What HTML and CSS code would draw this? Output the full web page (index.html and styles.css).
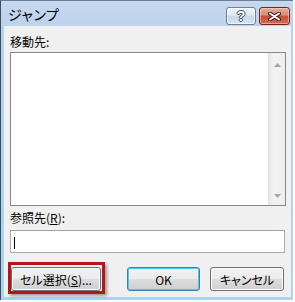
FILE: index.html
```html
<!DOCTYPE html>
<html lang="ja">
<head>
    <meta charset="UTF-8">
    <meta name="viewport" content="width=device-width, initial-scale=1.0">
    <title>ジャンプ</title>
    <link rel="stylesheet" href="styles.css">
</head>
<body>

    <div class="window">
        <div class="titlebar">
            <span class="title">ジャンプ</span>
            <div class="captionButtons">
                <button class="cap help"><span>?</span></button>
                <button class="cap close">
                    <svg width="13" height="9" viewBox="0 0 13 9">
                        <path d="M2 1.5 L11 7.5 M2 7.5 L11 1.5" stroke="#3b1f1a" stroke-width="4" stroke-linecap="round"/>
                        <path d="M2 1.5 L11 7.5 M2 7.5 L11 1.5" stroke="#fff" stroke-width="2" stroke-linecap="round"/>
                    </svg>
                </button>
            </div>
        </div>

        <div class="client">
            <label class="fieldLabel">移動先:</label>
            <div class="listbox">
                <div class="listItems"></div>
                <div class="scrollbar">
                    <svg width="7" height="4" viewBox="0 0 7 4"><path d="M0 4 L3.5 0 L7 4 Z" fill="#a6a6a6"/></svg>
                    <svg width="7" height="4" viewBox="0 0 7 4"><path d="M0 0 L7 0 L3.5 4 Z" fill="#a6a6a6"/></svg>
                </div>
            </div>

            <label class="fieldLabel refLabel">参照先(<u>R</u>):</label>
            <div class="textbox"><span class="caret"></span></div>

            <div class="buttonRow">
                <button class="btn selectBtn">セル選択(<u>S</u>)...</button>
                <button class="btn okBtn">OK</button>
                <button class="btn cancelBtn">キャンセル</button>
            </div>
        </div>
    </div>

</body>
</html>
```

FILE: styles.css
```css
body {
    margin: 0;
    padding: 0;
    width: 295px;
    height: 302px;
    overflow: hidden;
    background-color: #fff;
    font-family: 'Noto Sans CJK JP', 'Liberation Sans', sans-serif;
    font-size: 12px;
    font-feature-settings: "palt";
    color: #000;
}

.window {
    width: 293px;
    height: 300px;
    box-sizing: border-box;
    border-top: 1px solid #6b7f99;
    border-left: 1px solid #3d4b5e;
    padding: 0 2px 3px 3px;
    background: linear-gradient(to bottom, #c6d9ee, #b9d1ea 30px, #a9d6ee);
    display: flex;
    flex-direction: column;
}

.titlebar {
    height: 25px;
    display: flex;
    align-items: center;
    justify-content: space-between;
}

.title {
    margin-left: 4px;
    margin-top: 1px;
    font-size: 14px;
    letter-spacing: 0.5px;
}

.captionButtons {
    display: flex;
    gap: 3px;
    margin-top: 5px;
    margin-right: 1px;
}

.cap {
    height: 18px;
    padding: 0;
    border-radius: 3px;
    display: flex;
    align-items: center;
    justify-content: center;
}

.help {
    width: 30px;
    border: 1px solid #6f7f97;
    background: linear-gradient(to bottom, #f1f5fb, #dfe8f5 45%, #c8d7eb 50%, #d6e3f3);
    box-shadow: inset 0 0 0 1px rgba(255, 255, 255, 0.6);
}

.help span {
    font-family: 'Liberation Sans', sans-serif;
    font-weight: bold;
    font-size: 14px;
    line-height: 1;
    color: #fff;
    text-shadow: 1px 0 #3c4656, -1px 0 #3c4656, 0 1px #3c4656, 0 -1px #3c4656;
}

.close {
    width: 31px;
    border: 1px solid #6a2a22;
    background: linear-gradient(to bottom, #e9ab9d, #db8a78 45%, #c84f38 50%, #d36a4f);
    box-shadow: inset 0 0 0 1px rgba(255, 220, 210, 0.5);
}

.client {
    flex: 1;
    background-color: #f0f0f0;
    padding: 8px 5px 0 6px;
    display: flex;
    flex-direction: column;
}

.fieldLabel {
    display: block;
    line-height: 16px;
    height: 16px;
}

.listbox {
    margin-top: 2px;
    height: 154px;
    box-sizing: border-box;
    border: 1px solid #828790;
    background-color: #fff;
    display: flex;
}

.listItems {
    flex: 1;
}

.scrollbar {
    width: 17px;
    background: linear-gradient(to right, #e8e8e8, #f2f2f2 30%, #eeeeee);
    border-left: 1px solid #e4e4e4;
    box-sizing: border-box;
    display: flex;
    flex-direction: column;
    justify-content: space-between;
    align-items: center;
    padding: 10px 0 7px 1px;
}

.refLabel {
    margin-top: 4px;
}

.textbox {
    margin-top: 4px;
    width: 275px;
    height: 23px;
    box-sizing: border-box;
    border: 1px solid #abadb3;
    border-top-color: #a0a3aa;
    background-color: #fff;
    padding: 6px 0 0 3px;
}

.caret {
    display: block;
    width: 1px;
    height: 12px;
    background-color: #000;
}

.buttonRow {
    margin-top: 14px;
    display: flex;
}

.btn {
    height: 24px;
    box-sizing: border-box;
    border: 1px solid #707070;
    border-radius: 3px;
    background: linear-gradient(to bottom, #f2f2f2, #ebebeb 48%, #dddddd 52%, #cfcfcf);
    box-shadow: inset 0 0 0 1px #fcfcfc;
    font-family: inherit;
    font-size: 12px;
    font-feature-settings: "palt";
    color: #000;
    padding: 0;
}

.selectBtn {
    position: relative;
    width: 90px;
    margin-left: 1px;
}

/* red annotation frame around the button */
.selectBtn::after {
    content: "";
    position: absolute;
    top: -6px;
    left: -4px;
    right: -5px;
    bottom: -4px;
    border: 3px solid #b8141a;
    box-shadow: 2px 2px 3px rgba(0, 0, 0, 0.35);
    pointer-events: none;
}

.okBtn {
    width: 73px;
    margin-left: 26px;
    border-color: #3c7fb1;
    box-shadow: inset 0 0 0 1px #48c8f4;
}

.cancelBtn {
    width: 74px;
    margin-left: 10px;
}
```
